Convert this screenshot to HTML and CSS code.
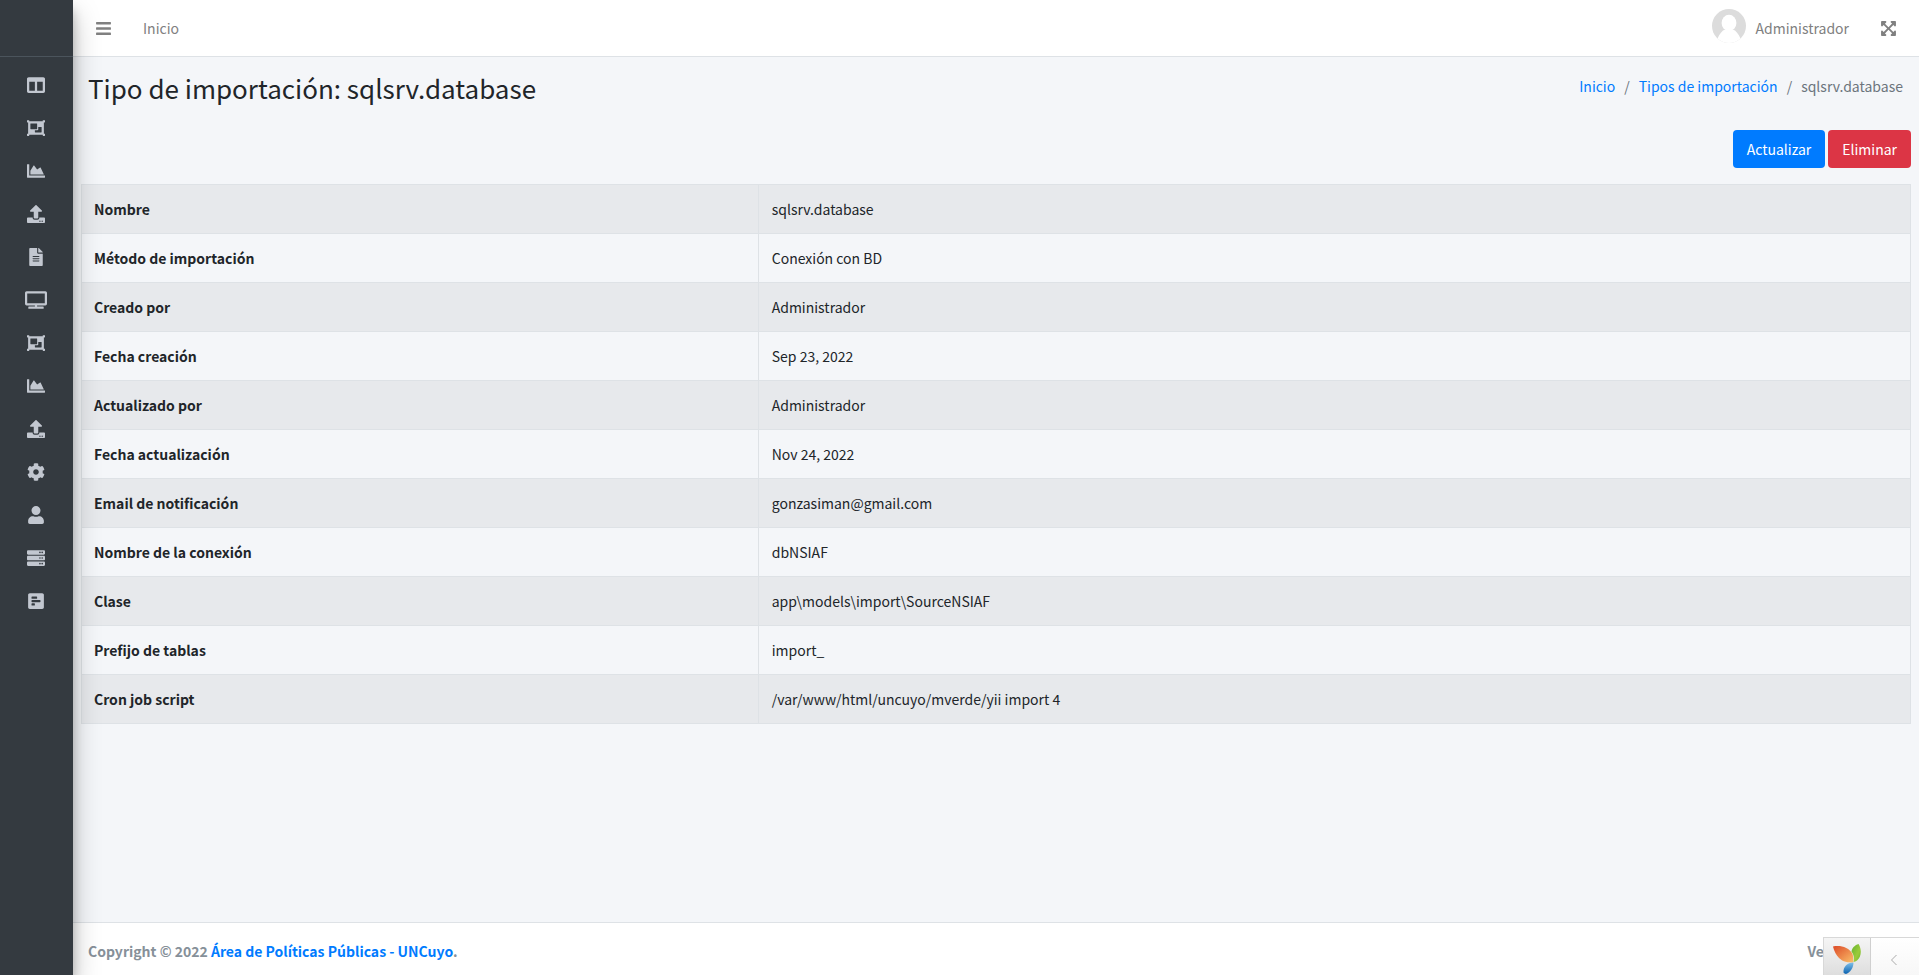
FILE: index.html
```html
<!DOCTYPE html>
<html lang="es">
<head>
  <meta charset="UTF-8" />
  <meta name="viewport" content="width=device-width, initial-scale=1" />
  <title>Tipo de importación: sqlsrv.database</title>
  <link rel="stylesheet" href="styles.css">
</head>
<body>

  <!-- Iconos -->
  <svg class="sprite" aria-hidden="true">
    <symbol id="i-columns" viewBox="0 0 512 512"><path d="M464 32H48C21.49 32 0 53.49 0 80v352c0 26.51 21.49 48 48 48h416c26.51 0 48-21.49 48-48V80c0-26.51-21.49-48-48-48zM224 416H64V160h160v256zm224 0H288V160h160v256z"/></symbol>
    <symbol id="i-group" viewBox="0 0 512 512"><path d="M480 128V96h20c6.627 0 12-5.373 12-12V44c0-6.627-5.373-12-12-12h-40c-6.627 0-12 5.373-12 12v20H64V44c0-6.627-5.373-12-12-12H12C5.373 32 0 37.373 0 44v40c0 6.627 5.373 12 12 12h20v320H12c-6.627 0-12 5.373-12 12v40c0 6.627 5.373 12 12 12h40c6.627 0 12-5.373 12-12v-20h384v20c0 6.627 5.373 12 12 12h40c6.627 0 12-5.373 12-12v-40c0-6.627-5.373-12-12-12h-20V128zM96 276V140c0-6.627 5.373-12 12-12h168c6.627 0 12 5.373 12 12v136c0 6.627-5.373 12-12 12H108c-6.627 0-12-5.373-12-12zm320 96c0 6.627-5.373 12-12 12H236c-6.627 0-12-5.373-12-12v-52h72c13.255 0 24-10.745 24-24v-72h84c6.627 0 12 5.373 12 12v136z"/></symbol>
    <symbol id="i-chart" viewBox="0 0 512 512"><path d="M500 384c6.6 0 12 5.4 12 12v40c0 6.6-5.4 12-12 12H12c-6.6 0-12-5.4-12-12V76c0-6.6 5.4-12 12-12h40c6.6 0 12 5.4 12 12v308h436zM372.7 159.5L288 216l-85.3-113.7c-5.1-6.8-15.5-6.3-19.9 1L96 248v104h384l-89.9-187.8c-3.2-6.5-11.4-8.7-17.4-4.7z"/></symbol>
    <symbol id="i-upload" viewBox="0 0 512 512"><path d="M296 384h-80c-13.3 0-24-10.7-24-24V192h-87.7c-17.8 0-26.7-21.5-14.1-34.1L242.3 5.7c7.5-7.5 19.8-7.5 27.3 0l152.2 152.2c12.6 12.6 3.7 34.1-14.1 34.1H320v168c0 13.3-10.7 24-24 24zm216-8v112c0 13.3-10.7 24-24 24H24c-13.3 0-24-10.7-24-24V376c0-13.3 10.7-24 24-24h136v8c0 30.9 25.1 56 56 56h80c30.9 0 56-25.1 56-56v-8h136c13.3 0 24 10.7 24 24zm-124 88c0-11-9-20-20-20s-20 9-20 20 9 20 20 20 20-9 20-20zm64 0c0-11-9-20-20-20s-20 9-20 20 9 20 20 20 20-9 20-20z"/></symbol>
    <symbol id="i-file" viewBox="0 0 384 512"><path d="M224 136V0H24C10.7 0 0 10.7 0 24v464c0 13.3 10.7 24 24 24h336c13.3 0 24-10.7 24-24V160H248c-13.2 0-24-10.8-24-24zm64 236c0 6.6-5.4 12-12 12H108c-6.6 0-12-5.4-12-12v-8c0-6.6 5.4-12 12-12h168c6.6 0 12 5.4 12 12v8zm0-64c0 6.6-5.4 12-12 12H108c-6.6 0-12-5.4-12-12v-8c0-6.6 5.4-12 12-12h168c6.6 0 12 5.4 12 12v8zm0-72v8c0 6.6-5.4 12-12 12H108c-6.6 0-12-5.4-12-12v-8c0-6.6 5.4-12 12-12h168c6.6 0 12 5.4 12 12zm96-114.1v6.1H256V0h6.1c6.4 0 12.5 2.5 17 7l97.9 98c4.5 4.5 7 10.6 7 16.9z"/></symbol>
    <symbol id="i-tv" viewBox="0 0 640 512"><path d="M592 0H48A48 48 0 0 0 0 48v320a48 48 0 0 0 48 48h240v32H112a16 16 0 0 0-16 16v32a16 16 0 0 0 16 16h416a16 16 0 0 0 16-16v-32a16 16 0 0 0-16-16H352v-32h240a48 48 0 0 0 48-48V48a48 48 0 0 0-48-48zm-16 352H64V64h512z"/></symbol>
    <symbol id="i-cog" viewBox="0 0 512 512"><path d="M487.4 315.7l-42.6-24.6c4.3-23.2 4.3-47 0-70.2l42.6-24.6c4.9-2.8 7.1-8.6 5.5-14-11.1-35.6-30-67.8-54.7-94.6-3.8-4.1-10-5.1-14.8-2.3L380.8 110c-17.9-15.4-38.5-27.3-60.8-35.1V25.8c0-5.6-3.9-10.5-9.4-11.7-36.7-8.2-74.3-7.8-109.2 0-5.5 1.2-9.4 6.1-9.4 11.7V75c-22.2 7.9-42.8 19.8-60.8 35.1L88.7 85.5c-4.9-2.8-11-1.9-14.8 2.3-24.7 26.7-43.6 58.9-54.7 94.6-1.7 5.4.6 11.2 5.5 14L67.3 221c-4.3 23.2-4.3 47 0 70.2l-42.6 24.6c-4.9 2.8-7.1 8.6-5.5 14 11.1 35.6 30 67.8 54.7 94.6 3.8 4.1 10 5.1 14.8 2.3l42.6-24.6c17.9 15.4 38.5 27.3 60.8 35.1v49.2c0 5.6 3.9 10.5 9.4 11.7 36.7 8.2 74.3 7.8 109.2 0 5.5-1.2 9.4-6.1 9.4-11.7v-49.2c22.2-7.9 42.8-19.8 60.8-35.1l42.6 24.6c4.9 2.8 11 1.9 14.8-2.3 24.7-26.7 43.6-58.9 54.7-94.6 1.5-5.5-.7-11.3-5.6-14.1zM256 336c-44.1 0-80-35.9-80-80s35.9-80 80-80 80 35.9 80 80-35.9 80-80 80z"/></symbol>
    <symbol id="i-user" viewBox="0 0 448 512"><path d="M224 256c70.7 0 128-57.3 128-128S294.7 0 224 0 96 57.3 96 128s57.3 128 128 128zm89.6 32h-16.7c-22.2 10.2-46.9 16-72.9 16s-50.6-5.8-72.9-16h-16.7C60.2 288 0 348.2 0 422.4V464c0 26.5 21.5 48 48 48h352c26.5 0 48-21.5 48-48v-41.6c0-74.2-60.2-134.4-134.4-134.4z"/></symbol>
    <symbol id="i-server" viewBox="0 0 512 512"><path d="M480 160H32c-17.673 0-32-14.327-32-32V64c0-17.673 14.327-32 32-32h448c17.673 0 32 14.327 32 32v64c0 17.673-14.327 32-32 32zm-48-88c-13.255 0-24 10.745-24 24s10.745 24 24 24 24-10.745 24-24-10.745-24-24-24zm-64 0c-13.255 0-24 10.745-24 24s10.745 24 24 24 24-10.745 24-24-10.745-24-24-24zm112 248H32c-17.673 0-32-14.327-32-32v-64c0-17.673 14.327-32 32-32h448c17.673 0 32 14.327 32 32v64c0 17.673-14.327 32-32 32zm-48-88c-13.255 0-24 10.745-24 24s10.745 24 24 24 24-10.745 24-24-10.745-24-24-24zm-64 0c-13.255 0-24 10.745-24 24s10.745 24 24 24 24-10.745 24-24-10.745-24-24-24zm112 248H32c-17.673 0-32-14.327-32-32v-64c0-17.673 14.327-32 32-32h448c17.673 0 32 14.327 32 32v64c0 17.673-14.327 32-32 32zm-48-88c-13.255 0-24 10.745-24 24s10.745 24 24 24 24-10.745 24-24-10.745-24-24-24zm-64 0c-13.255 0-24 10.745-24 24s10.745 24 24 24 24-10.745 24-24-10.745-24-24-24z"/></symbol>
    <symbol id="i-poll" viewBox="0 0 448 512"><path d="M448 432V80c0-26.5-21.5-48-48-48H48C21.5 32 0 53.5 0 80v352c0 26.5 21.5 48 48 48h352c26.5 0 48-21.5 48-48zM112 192c-8.84 0-16-7.16-16-16v-32c0-8.84 7.16-16 16-16h128c8.84 0 16 7.16 16 16v32c0 8.84-7.16 16-16 16H112zm0 96c-8.84 0-16-7.16-16-16v-32c0-8.84 7.16-16 16-16h224c8.84 0 16 7.16 16 16v32c0 8.84-7.16 16-16 16H112zm0 96c-8.84 0-16-7.16-16-16v-32c0-8.84 7.16-16 16-16h64c8.84 0 16 7.16 16 16v32c0 8.84-7.16 16-16 16h-64z"/></symbol>
    <symbol id="i-bars" viewBox="0 0 448 512"><path d="M16 132h416c8.837 0 16-7.163 16-16V76c0-8.837-7.163-16-16-16H16C7.163 60 0 67.163 0 76v40c0 8.837 7.163 16 16 16zm0 160h416c8.837 0 16-7.163 16-16v-40c0-8.837-7.163-16-16-16H16c-8.837 0-16 7.163-16 16v40c0 8.837 7.163 16 16 16zm0 160h416c8.837 0 16-7.163 16-16v-40c0-8.837-7.163-16-16-16H16c-8.837 0-16 7.163-16 16v40c0 8.837 7.163 16 16 16z"/></symbol>
    <symbol id="i-expand" viewBox="0 0 448 512"><path d="M448 344v112a23.94 23.94 0 0 1-24 24H312c-21.39 0-32.09-25.9-17-41l36.2-36.2L224 295.6 116.77 402.9 153 439c15.09 15.1 4.39 41-17 41H24a23.94 23.94 0 0 1-24-24V344c0-21.4 25.89-32.1 41-17l36.19 36.2L184.46 256 77.18 148.7 41 185c-15.1 15.1-41 4.4-41-17V56a23.94 23.94 0 0 1 24-24h112c21.39 0 32.09 25.9 17 41l-36.2 36.2L224 216.4l107.23-107.3L295 73c-15.09-15.1-4.39-41 17-41h112a23.94 23.94 0 0 1 24 24v112c0 21.4-25.89 32.1-41 17l-36.19-36.2L263.54 256l107.28 107.3L407 327.1c15.1-15.2 41-4.5 41 16.9z"/></symbol>
  </svg>

  <div class="wrapper">
    <aside class="sidebar">
      <div class="brand"></div>
      <nav class="side-nav" aria-label="Menú lateral">
        <a href="#" aria-label="Tableros"><svg><use href="#i-columns"/></svg></a>
        <a href="#" aria-label="Grupos"><svg><use href="#i-group"/></svg></a>
        <a href="#" aria-label="Gráficos"><svg><use href="#i-chart"/></svg></a>
        <a href="#" aria-label="Importar"><svg><use href="#i-upload"/></svg></a>
        <a href="#" aria-label="Documentos"><svg><use href="#i-file"/></svg></a>
        <a href="#" aria-label="Pantallas"><svg class="wide"><use href="#i-tv"/></svg></a>
        <a href="#" aria-label="Tipos de grupo"><svg><use href="#i-group"/></svg></a>
        <a href="#" aria-label="Tipos de gráfico"><svg><use href="#i-chart"/></svg></a>
        <a href="#" aria-label="Tipos de importación"><svg><use href="#i-upload"/></svg></a>
        <a href="#" aria-label="Configuración"><svg><use href="#i-cog"/></svg></a>
        <a href="#" aria-label="Usuarios"><svg><use href="#i-user"/></svg></a>
        <a href="#" aria-label="Servidor"><svg><use href="#i-server"/></svg></a>
        <a href="#" aria-label="Registros"><svg><use href="#i-poll"/></svg></a>
      </nav>
    </aside>

    <div class="page">
      <header class="navbar">
        <button type="button" class="icon-btn" aria-label="Menú"><svg><use href="#i-bars"/></svg></button>
        <a href="#" class="nav-link">Inicio</a>
        <a href="#" class="user">
          <svg class="avatar" viewBox="0 0 34 34">
            <clipPath id="round"><circle cx="17" cy="17" r="17"/></clipPath>
            <g clip-path="url(#round)">
              <rect width="34" height="34" fill="#dcdcdc"/>
              <ellipse cx="17" cy="14" rx="7.4" ry="8.2" fill="#fff"/>
              <path d="M4 33c2-5 4-9 7-11.500c1.500-1 3-1 4-.5h4c1-.5 2.500-.5 4 .5c3 2.500 5 6.500 7 11.500v2H4z" fill="#fff"/>
            </g>
          </svg>
          Administrador
        </a>
        <button type="button" class="icon-btn" aria-label="Pantalla completa"><svg><use href="#i-expand"/></svg></button>
      </header>

      <main class="content">
        <div class="content-header">
          <h1>Tipo de importación: sqlsrv.database</h1>
          <ol class="breadcrumb">
            <li><a href="#">Inicio</a></li>
            <li><a href="#">Tipos de importación</a></li>
            <li>sqlsrv.database</li>
          </ol>
        </div>

        <div class="actions">
          <a href="#" class="btn btn-primary">Actualizar</a>
          <button type="button" class="btn btn-danger">Eliminar</button>
        </div>

        <table class="detail">
          <tr><th scope="row">Nombre</th><td>sqlsrv.database</td></tr>
          <tr><th scope="row">Método de importación</th><td>Conexión con BD</td></tr>
          <tr><th scope="row">Creado por</th><td>Administrador</td></tr>
          <tr><th scope="row">Fecha creación</th><td>Sep 23, 2022</td></tr>
          <tr><th scope="row">Actualizado por</th><td>Administrador</td></tr>
          <tr><th scope="row">Fecha actualización</th><td>Nov 24, 2022</td></tr>
          <tr><th scope="row">Email de notificación</th><td>gonzasiman@gmail.com</td></tr>
          <tr><th scope="row">Nombre de la conexión</th><td>dbNSIAF</td></tr>
          <tr><th scope="row">Clase</th><td>app\models\import\SourceNSIAF</td></tr>
          <tr><th scope="row">Prefijo de tablas</th><td>import_</td></tr>
          <tr><th scope="row">Cron job script</th><td>/var/www/html/uncuyo/mverde/yii import 4</td></tr>
        </table>
      </main>

      <footer class="footer">
        <strong>Copyright © 2022 <a href="#">Área de Políticas Públicas - UNCuyo</a>.</strong>
        <strong class="version">Ve</strong>
      </footer>
    </div>
  </div>

  <!-- Barra de depuración -->
  <div class="debug-bar">
    <a href="#" class="debug-logo" aria-label="Yii Debugger">
      <svg viewBox="0 0 28 30">
        <defs>
          <linearGradient id="g-red" x1="0" y1="0" x2="1" y2="1"><stop offset="0" stop-color="#dc4a27"/><stop offset="1" stop-color="#fbc06a"/></linearGradient>
          <linearGradient id="g-green" x1="0" y1="0" x2="1" y2="1"><stop offset="0" stop-color="#62b32e"/><stop offset=".6" stop-color="#9ccb3b"/><stop offset="1" stop-color="#6bb52e"/></linearGradient>
          <linearGradient id="g-blue" x1="0" y1="0" x2="0" y2="1"><stop offset="0" stop-color="#7fc0ea"/><stop offset="1" stop-color="#0b62b0"/></linearGradient>
        </defs>
        <path d="M0 2.500C7 1 16 3 19.500 10c1 3 1 6 .5 8.500C15 18.500 10 18 6 14C3 11 1 7 0 2.500z" fill="url(#g-red)"/>
        <path d="M25.500 0c3.500 5 3 13-1.500 16.500c-1 .8-2.500 1.300-3.500 1.500c1-4 .5-7-2-10.500C19 4 22 1 25.500 0z" fill="url(#g-green)"/>
        <path d="M20.500 18.500c0 5-3 10-7.500 11.500c-1-.2-2-.8-2.500-1.500C10 23 14 18.500 20.500 18.500z" fill="url(#g-blue)"/>
      </svg>
    </a>
    <button type="button" class="debug-toggle" aria-label="Abrir barra">
      <svg viewBox="0 0 8 12"><path d="M6.500 1L1.500 6l5 5"/></svg>
    </button>
  </div>

</body>
</html>
```
FILE: styles.css
```css
:root {
  --blue: #007bff;
  --red: #dc3545;
  --dark: #343a40;
  --border: #dee2e6;
  --bg: #f4f6f9;
  --text: #212529;
}
* {
  margin: 0;
  padding: 0;
  box-sizing: border-box;
}
body {
  font-family: "Source Sans Pro", "Noto Sans CJK JP", "Open Sans", sans-serif;
  font-size: 14px;
  line-height: 24px;
  color: var(--text);
  background: var(--bg);
}
a {
  color: var(--blue);
  text-decoration: none;
}
button {
  font: inherit;
  border: none;
  background: none;
  cursor: pointer;
}
svg {
  display: block;
  fill: currentColor;
}
.sprite {
  display: none;
}
.wrapper {
  display: flex;
  min-height: 100vh;
}

/* --- Menú lateral --- */
.sidebar {
  flex: 0 0 73px;
  background: var(--dark);
  box-shadow: 0 14px 28px rgba(0,0,0,.25), 0 10px 10px rgba(0,0,0,.22);
  z-index: 2;
}
.brand {
  height: 57px;
  border-bottom: 1px solid #4b545c;
}
.side-nav {
  display: flex;
  flex-direction: column;
  gap: 3px;
  padding: 8px 9px 8px 8px;
}
.side-nav a {
  display: flex;
  align-items: center;
  justify-content: center;
  height: 40px;
  color: #c2c7d0;
}
.side-nav svg {
  width: 18px;
  height: 18px;
}
.side-nav .wide {
  width: 22px;
}

/* --- Barra superior --- */
.page {
  flex: 1;
  min-width: 0;
  display: flex;
  flex-direction: column;
}
.navbar {
  display: flex;
  align-items: center;
  height: 57px;
  padding: 0 8px;
  background: #fff;
  border-bottom: 1px solid var(--border);
}
.icon-btn {
  padding: 12px 14px;
  color: gray;
}
.icon-btn svg {
  width: 17px;
  height: 17px;
}
.nav-link,
.user {
  padding: 8px 17px;
  color: gray;
}
.user {
  display: flex;
  align-items: center;
  gap: 10px;
  margin-left: auto;
}
.avatar {
  width: 34px;
  height: 34px;
  margin-bottom: 4px;
}

/* --- Contenido --- */
.content {
  flex: 1;
  padding: 0 8px;
}
.content-header {
  display: flex;
  justify-content: space-between;
  padding: 14px 8px 16px 7px;
}
h1 {
  font-size: 26px;
  font-weight: 400;
  line-height: 34px;
}
.breadcrumb {
  display: flex;
  list-style: none;
  padding-top: 3px;
  color: #6c757d;
}
.breadcrumb li + li::before {
  content: "/";
  padding: 0 9px;
}
.actions {
  display: flex;
  justify-content: flex-end;
  gap: 3px;
  margin: 9px 0 16px;
}
.btn {
  padding: 7px 14px;
  border-radius: 4px;
  color: #fff;
}
.btn-primary {
  background: var(--blue);
}
.btn-danger {
  background: var(--red);
}
.detail {
  width: 100%;
  border-collapse: collapse;
}
.detail th,
.detail td {
  padding: 12px;
  border: 1px solid var(--border);
  text-align: left;
}
.detail th {
  width: 37%;
}
.detail td {
  padding-left: 13px;
}
.detail tr:nth-child(odd) {
  background: rgba(0,0,0,.05);
}

/* --- Pie --- */
.footer {
  display: flex;
  justify-content: space-between;
  padding: 16px 16px 12px 15px;
  background: #fff;
  border-top: 1px solid var(--border);
  color: #869099;
}
.version {
  padding-right: 79px;
}

/* --- Barra de depuración --- */
.debug-bar {
  position: fixed;
  right: 0;
  bottom: 0;
  z-index: 10;
  display: flex;
  width: 96px;
  height: 38px;
  border: 1px solid #d8d8d8;
  border-width: 1px 0 0 1px;
  background: linear-gradient(#fff, #f7f7f7);
}
.debug-logo {
  display: flex;
  align-items: center;
  justify-content: center;
  width: 47px;
  border-right: 1px solid #d0d0d0;
  background: linear-gradient(#f5f5f5, #dedede);
}
.debug-logo svg {
  width: 28px;
  height: 30px;
  margin-top: 4px;
}
.debug-toggle {
  display: flex;
  flex: 1;
  align-items: center;
  justify-content: center;
  padding: 6px 2px 0 0;
}
.debug-toggle svg {
  width: 8px;
  height: 12px;
  fill: none;
  stroke: #aaa;
}
```
